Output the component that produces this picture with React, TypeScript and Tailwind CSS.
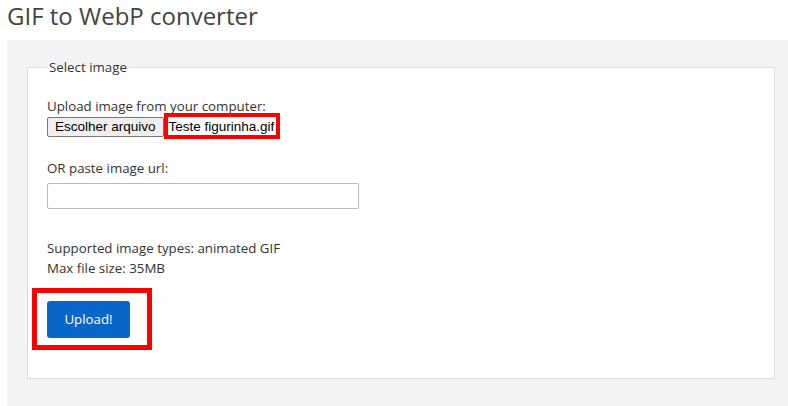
import React from "react";

export default function App() {
  return (
    <div className="w-[788px] h-[406px] overflow-hidden bg-white text-[#333] font-['Open_Sans',sans-serif]">
      <h1 className="pl-[7px] pt-[1px] h-[40px] text-[24px] leading-[30px] text-[#444] font-normal">
        GIF to WebP converter
      </h1>
      <div className="ml-[7px] h-[366px] bg-[#f3f4f5] pl-[20px] pr-[13px] pt-[17px]">
        <fieldset className="border border-[#dcdcdc] bg-white pl-[19px] pr-[20px] pb-[41px] h-[322px]">
          <legend className="px-[2px] text-[13.3px] leading-[20px]">Select image</legend>
          <div className="mt-[19px] text-[13.3px] leading-[20px]">Upload image from your computer:</div>
          <div className="flex items-center h-[21px] font-['Liberation_Sans',Arial,sans-serif] text-[13.5px] text-black">
            <button className="h-[20px] px-[7px] border border-[#767676] rounded-[2px] bg-[#efefef] leading-[18px]">
              Escolher arquivo
            </button>
            <span className="relative ml-[5px] leading-[17px]">
              Teste figurinha.gif
              <span className="absolute left-[-5px] right-[-6px] top-[-5px] bottom-[-4px] border-[4px] border-[#f00]" />
            </span>
          </div>
          <div className="mt-[21px] text-[13.3px] leading-[20px]">OR paste image url:</div>
          <input
            type="text"
            className="mt-[5px] block w-[312px] h-[26px] border border-[#b8b8b8] rounded-[2px] bg-white"
          />
          <div className="mt-[29px] text-[13.3px] leading-[20px]">
            Supported image types: animated GIF
            <br />
            Max file size: 35MB
          </div>
          <div className="mt-[23px] relative w-[83px] h-[37px]">
            <button className="w-[83px] h-[37px] rounded-[3px] bg-[#0866c8] text-white text-[13.3px]">
              Upload!
            </button>
            <span className="absolute left-[-15px] right-[-22px] top-[-13px] bottom-[-12px] border-[5px] border-[#f00]" />
          </div>
        </fieldset>
      </div>
    </div>
  );
}
